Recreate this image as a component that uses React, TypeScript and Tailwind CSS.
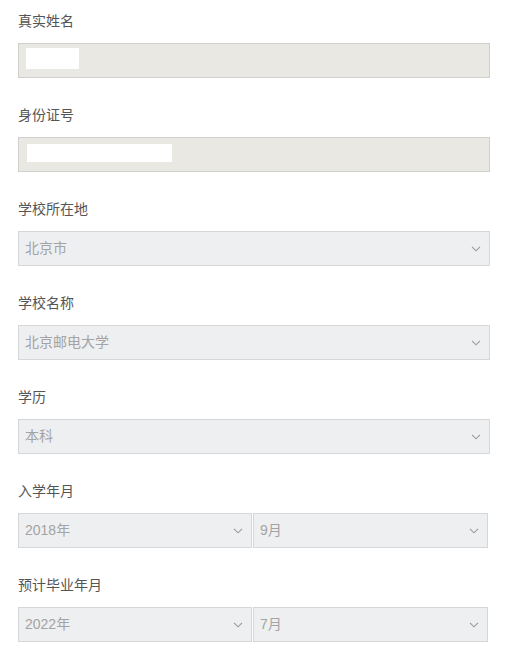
import type { ReactNode } from 'react'

const FONT = { fontFamily: '"Liberation Sans", "Noto Sans CJK SC", sans-serif' }

const Chevron = () => (
  <svg width="10" height="6" viewBox="0 0 10 6" className="shrink-0" aria-hidden="true">
    <path d="M1 0.8 L5 4.8 L9 0.8" fill="none" stroke="#9a9a9a" strokeWidth="1.1" />
  </svg>
)

const Group = ({ label, children }: { label: string; children: ReactNode }) => (
  <div className="mb-[27px]">
    <div className="h-5 leading-5 text-[14px] text-[#555555]">{label}</div>
    <div className="mt-3">{children}</div>
  </div>
)

const ReadonlyBox = ({ maskW, maskH, maskX, maskY }: { maskW: string; maskH: string; maskX: string; maskY: string }) => (
  <div className="h-[35px] w-[472px] border border-[#cfcfcb] bg-[#e9e8e2]">
    <div className={`bg-white ${maskW} ${maskH} ${maskX} ${maskY}`} />
  </div>
)

const SelectBox = ({ value, width = 'w-[472px]' }: { value: string; width?: string }) => (
  <div
    className={`flex h-[35px] items-center justify-between border border-[#d6d7d9] bg-[#eeeff1] pl-[6px] pr-[8px] ${width}`}
  >
    <span className="text-[14px] text-[#a3a3a3]">{value}</span>
    <Chevron />
  </div>
)

export default function App() {
  return (
    <div className="min-h-[655px] w-[526px] bg-white pl-[18px] pt-[11px]" style={FONT}>
      <Group label="真实姓名">
        <ReadonlyBox maskW="w-[53px]" maskH="h-[21px]" maskX="ml-[7px]" maskY="mt-[4px]" />
      </Group>
      <Group label="身份证号">
        <ReadonlyBox maskW="w-[145px]" maskH="h-[18px]" maskX="ml-[8px]" maskY="mt-[6px]" />
      </Group>
      <Group label="学校所在地">
        <SelectBox value="北京市" />
      </Group>
      <Group label="学校名称">
        <SelectBox value="北京邮电大学" />
      </Group>
      <Group label="学历">
        <SelectBox value="本科" />
      </Group>
      <Group label="入学年月">
        <div className="flex gap-px">
          <SelectBox value="2018年" width="w-[234px]" />
          <SelectBox value="9月" width="w-[235px]" />
        </div>
      </Group>
      <Group label="预计毕业年月">
        <div className="flex gap-px">
          <SelectBox value="2022年" width="w-[234px]" />
          <SelectBox value="7月" width="w-[235px]" />
        </div>
      </Group>
    </div>
  )
}
